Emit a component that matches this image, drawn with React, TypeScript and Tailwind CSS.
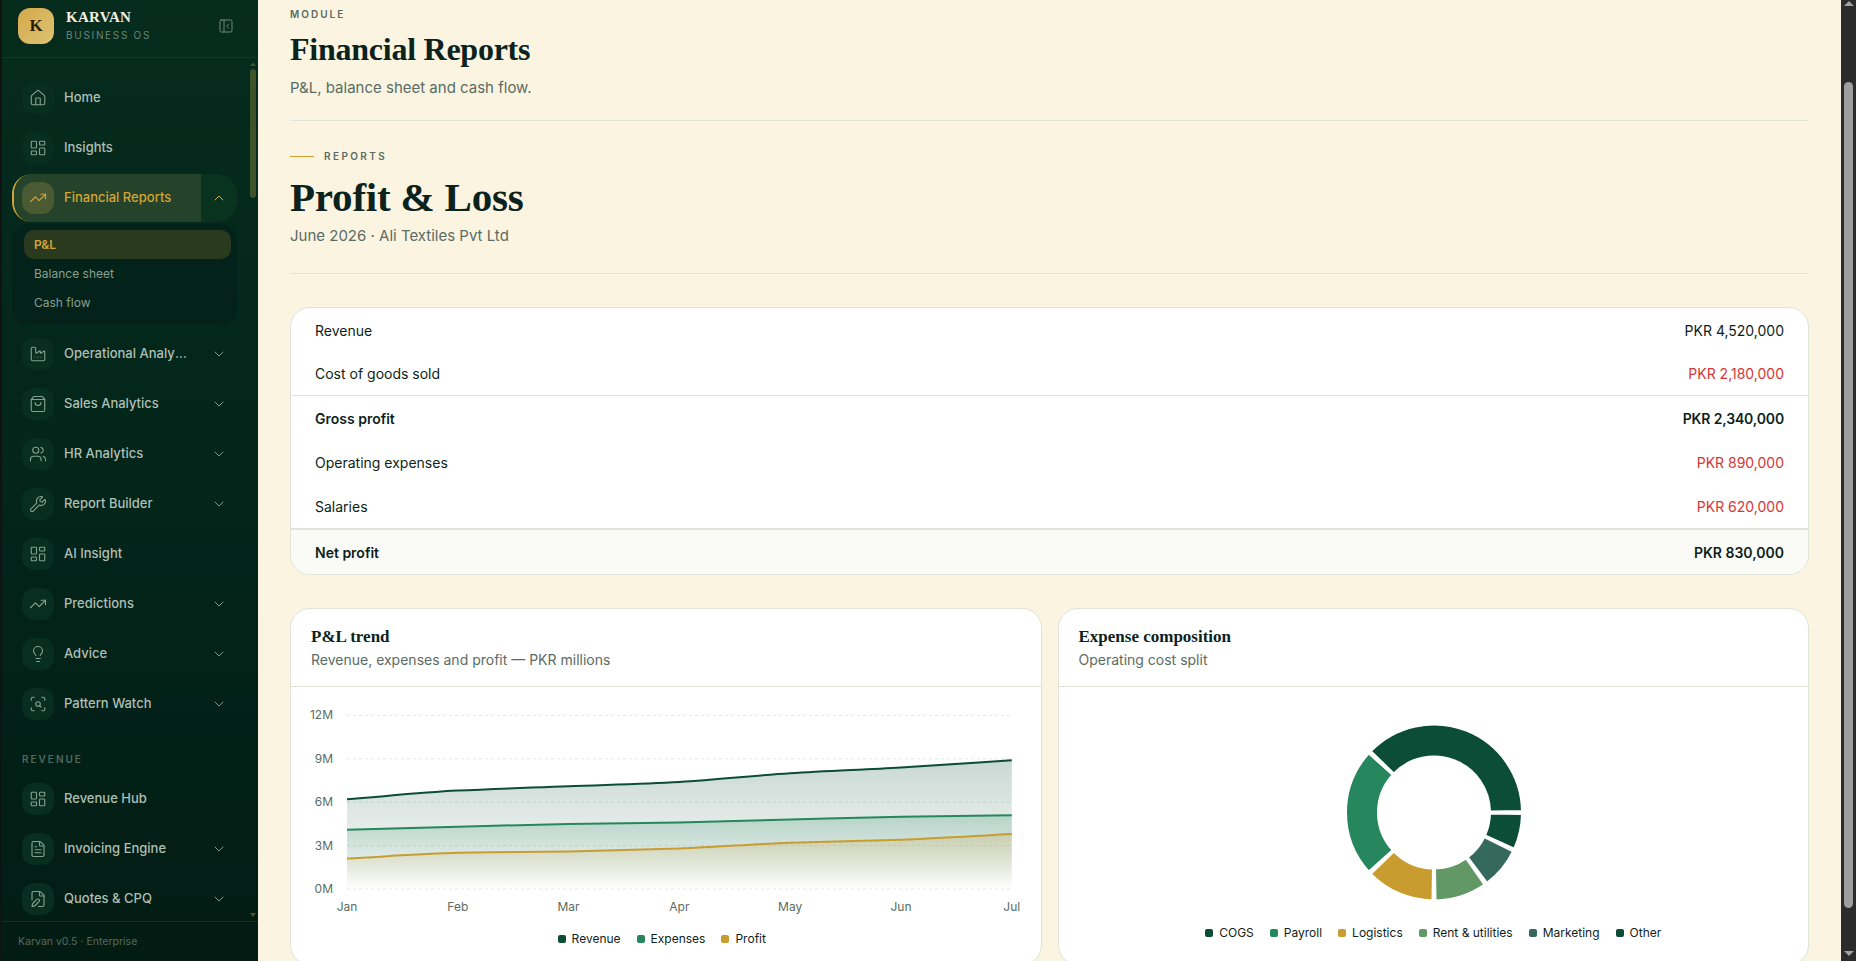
import {
  ChevronDown,
  ChevronUp,
  Factory,
  FilePen,
  FileText,
  House,
  LayoutDashboard,
  Lightbulb,
  PanelLeftClose,
  ScanSearch,
  ShoppingBag,
  TrendingUp,
  Users,
  Wrench,
  type LucideIcon,
} from 'lucide-react';

const serif = "font-['Liberation_Serif',serif]";

interface NavItem {
  label: string;
  icon: LucideIcon;
  chevron?: boolean;
}

const analyticsNav: NavItem[] = [
  { label: 'Operational Analytics', icon: Factory, chevron: true },
  { label: 'Sales Analytics', icon: ShoppingBag, chevron: true },
  { label: 'HR Analytics', icon: Users, chevron: true },
  { label: 'Report Builder', icon: Wrench, chevron: true },
  { label: 'AI Insight', icon: LayoutDashboard },
  { label: 'Predictions', icon: TrendingUp, chevron: true },
  { label: 'Advice', icon: Lightbulb, chevron: true },
  { label: 'Pattern Watch', icon: ScanSearch, chevron: true },
];

const revenueNav: NavItem[] = [
  { label: 'Revenue Hub', icon: LayoutDashboard },
  { label: 'Invoicing Engine', icon: FileText, chevron: true },
  { label: 'Quotes & CPQ', icon: FilePen, chevron: true },
];

const rows = [
  { label: 'Revenue', value: 'PKR 4,520,000' },
  { label: 'Cost of goods sold', value: 'PKR 2,180,000', red: true, divider: true },
  { label: 'Gross profit', value: 'PKR 2,340,000', bold: true },
  { label: 'Operating expenses', value: 'PKR 890,000', red: true },
  { label: 'Salaries', value: 'PKR 620,000', red: true },
];

const months = ['Jan', 'Feb', 'Mar', 'Apr', 'May', 'Jun', 'Jul'];
const trend = [
  { key: 'Revenue', color: '#0b4d36', values: [6.2, 6.8, 7.1, 7.4, 8.0, 8.4, 8.9] },
  { key: 'Expenses', color: '#26875f', values: [4.1, 4.3, 4.5, 4.6, 4.8, 5.0, 5.1] },
  { key: 'Profit', color: '#c99c30', values: [2.1, 2.5, 2.6, 2.8, 3.2, 3.4, 3.8] },
];

const expenses = [
  { label: 'COGS', color: '#0b4d36', pct: 38 },
  { label: 'Payroll', color: '#26875f', pct: 24 },
  { label: 'Logistics', color: '#c99c30', pct: 13 },
  { label: 'Rent & utilities', color: '#629865', pct: 10 },
  { label: 'Marketing', color: '#35695b', pct: 8 },
  { label: 'Other', color: '#0b4d36', pct: 7 },
];

const chartX = (i: number) => 56 + i * 110.8;
const chartY = (v: number) => 202 - v * 14.47;

// same shape as d3 curveMonotoneX
function monotonePath(pts: [number, number][]) {
  const n = pts.length;
  const slopes: number[] = [];
  for (let i = 0; i < n - 1; i++) {
    slopes.push((pts[i + 1][1] - pts[i][1]) / (pts[i + 1][0] - pts[i][0]));
  }
  const tangents = pts.map((_, i) => {
    if (i === 0) return slopes[0];
    if (i === n - 1) return slopes[n - 2];
    const a = slopes[i - 1];
    const b = slopes[i];
    if (a * b <= 0) return 0;
    return (2 * a * b) / (a + b);
  });
  let d = `M${pts[0][0]},${pts[0][1]}`;
  for (let i = 0; i < n - 1; i++) {
    const h = (pts[i + 1][0] - pts[i][0]) / 3;
    d += `C${pts[i][0] + h},${pts[i][1] + h * tangents[i]} ${pts[i + 1][0] - h},${pts[i + 1][1] - h * tangents[i + 1]} ${pts[i + 1][0]},${pts[i + 1][1]}`;
  }
  return d;
}

function donutSlice(cx: number, cy: number, r0: number, r1: number, from: number, to: number) {
  const pt = (r: number, a: number) => {
    const rad = (a * Math.PI) / 180;
    return `${cx + r * Math.cos(rad)},${cy - r * Math.sin(rad)}`;
  };
  const large = to - from > 180 ? 1 : 0;
  return `M${pt(r1, from)}A${r1},${r1} 0 ${large} 0 ${pt(r1, to)}L${pt(r0, to)}A${r0},${r0} 0 ${large} 1 ${pt(r0, from)}Z`;
}

function NavRow({ item }: { item: NavItem }) {
  const Icon = item.icon;
  return (
    <div className="mb-0.5 flex h-12 shrink-0 items-center pl-5 pr-[31px]">
      <span className="flex h-8 w-8 shrink-0 items-center justify-center rounded-xl bg-[#072e20] text-[#84a091]">
        <Icon size={18} strokeWidth={1.5} />
      </span>
      <span className="ml-2.5 w-[123px] truncate text-[13px] font-medium text-[#aebfb4]">{item.label}</span>
      {item.chevron && <ChevronDown size={16} strokeWidth={1.5} className="ml-auto text-[#7d9a8b]" />}
    </div>
  );
}

function Sidebar() {
  return (
    <aside className="flex h-screen w-[258px] shrink-0 flex-col border-l-2 border-[#0f1412] bg-gradient-to-b from-[#062c1e] via-[#03251a] to-[#021c14]">
      <div className="flex h-[58px] shrink-0 items-start border-b border-[#103a29] pl-4 pr-6 pt-2">
        <div className={`flex h-9 w-9 items-center justify-center rounded-xl bg-gradient-to-br from-[#d4a94a] to-[#dcc373] text-[17px] font-bold text-[#2b1c08] ${serif}`}>
          K
        </div>
        <div className="ml-3">
          <div className={`text-[15px] leading-[18px] font-bold tracking-[0.3px] text-[#f3efe0] ${serif}`}>KARVAN</div>
          <div className="mt-px text-[10px] leading-[16px] tracking-[1.7px] text-[#6b8578]">BUSINESS OS</div>
        </div>
        <PanelLeftClose size={16} strokeWidth={1.5} className="ml-auto mt-2.5 text-[#6d8a7b]" />
      </div>

      <div className="relative min-h-0 flex-1 overflow-hidden pt-4">
        <NavRow item={{ label: 'Home', icon: House }} />
        <NavRow item={{ label: 'Insights', icon: LayoutDashboard }} />

        <div className="ml-2.5 mr-[21px] flex h-12 overflow-hidden rounded-[20px] border-l-2 border-[#d4a437]">
          <div className="flex flex-1 items-center bg-[#24432a] pl-2">
            <span className="flex h-8 w-8 items-center justify-center rounded-xl bg-[#4a5a33] text-[#d4a437]">
              <TrendingUp size={18} strokeWidth={1.5} />
            </span>
            <span className="ml-2.5 text-[13px] font-medium text-[#d4a437]">Financial Reports</span>
          </div>
          <div className="flex w-9 items-center justify-center bg-[#07331f] text-[#d4a437]">
            <ChevronUp size={16} strokeWidth={1.5} />
          </div>
        </div>

        <div className="ml-2.5 mr-[21px] mt-0.5 mb-1.5 flex h-[100px] flex-col rounded-2xl bg-[#03211a]/90 pl-3 pr-1.5 pt-1.5 text-[12px]">
          <div className="flex h-[29px] items-center rounded-[10px] bg-[#2a3a1e] pl-2.5 font-semibold text-[#d4a437]">P&amp;L</div>
          <div className="flex h-[29px] items-center pl-2.5 text-[#87a090]">Balance sheet</div>
          <div className="flex h-[29px] items-center pl-2.5 text-[#87a090]">Cash flow</div>
        </div>

        {analyticsNav.map((item) => (
          <NavRow key={item.label} item={item} />
        ))}

        <div className="flex h-[45px] items-center pl-5 pt-3.5 text-[10px] font-semibold tracking-[2px] text-[#4f6a5c]">REVENUE</div>

        {revenueNav.map((item) => (
          <NavRow key={item.label} item={item} />
        ))}

        {/* sidebar scrollbar */}
        <div className="absolute right-0 top-0 bottom-0 flex w-[9px] flex-col items-center pr-0.5">
          <div className="mt-1 h-0 w-0 border-x-[3px] border-b-[4px] border-x-transparent border-b-[#3f5228]" />
          <div className="mt-[3px] h-[129px] w-1.5 rounded-full bg-[#3f5228]" />
          <div className="mt-auto mb-1 h-0 w-0 border-x-[3px] border-t-[4px] border-x-transparent border-t-[#5a5224]" />
        </div>
      </div>

      <div className="flex h-10 shrink-0 items-center border-t border-[#0e3324] pl-4 text-[10.5px] text-[#56695f]">
        Karvan v0.5 · Enterprise
      </div>
    </aside>
  );
}

function Hairline() {
  return <div className="h-px bg-[#e3e4d9]" />;
}

function PageHeads() {
  return (
    <>
      <div className="text-[10px] leading-[14px] font-semibold tracking-[2px] text-[#5b6c64]">MODULE</div>
      <h2 className={`mt-[9px] text-[32px] leading-[38px] font-bold tracking-[-0.25px] text-[#0b231c] ${serif}`}>Financial Reports</h2>
      <p className="mt-[9px] text-[15px] leading-[22px] text-[#5b6c64]">P&amp;L, balance sheet and cash flow.</p>
      <div className="mt-[21px]">
        <Hairline />
      </div>

      <div className="mt-[28px] flex items-center gap-2.5">
        <span className="h-px w-6 bg-[#cf9f2e]" />
        <span className="text-[10px] leading-[14px] font-semibold tracking-[2.4px] text-[#5b6c64]">REPORTS</span>
      </div>
      <h1 className={`mt-[10px] text-[41px] leading-[48px] font-bold tracking-[-0.2px] text-[#0b231c] ${serif}`}>Profit &amp; Loss</h1>
      <p className="mt-[4px] text-[15px] leading-[22px] text-[#5b6c64]">June 2026 · Ali Textiles Pvt Ltd</p>
      <div className="mt-[26px]">
        <Hairline />
      </div>
    </>
  );
}

function PnlTable() {
  return (
    <div className="mt-[33px] overflow-hidden rounded-[20px] border border-[#dfe3da] bg-white text-[14px] text-[#0d1f1a]">
      {rows.map((row) => (
        <div
          key={row.label}
          className={`flex h-11 items-center justify-between px-6 ${row.divider ? 'border-b border-[#dfe3da]' : ''} ${row.bold ? 'font-semibold' : ''}`}
        >
          <span>{row.label}</span>
          <span className={row.red ? 'text-[#d63636]' : row.bold ? 'tracking-[-0.15px]' : ''}>{row.value}</span>
        </div>
      ))}
      <div className="flex h-[46px] items-center justify-between border-t-2 border-[#dfe3da] bg-[#fafaf7] px-6 font-semibold">
        <span>Net profit</span>
        <span>PKR 830,000</span>
      </div>
    </div>
  );
}

function Legend({ items }: { items: { label: string; color: string }[] }) {
  return (
    <div className="flex items-center justify-center gap-4 text-[12px] text-[#10241d]">
      {items.map((it) => (
        <span key={it.label} className="flex items-center gap-1.5">
          <span className="h-2 w-2 rounded-[2px]" style={{ background: it.color }} />
          {it.label}
        </span>
      ))}
    </div>
  );
}

function ChartCard({ title, sub, children }: { title: string; sub: string; children: React.ReactNode }) {
  return (
    <div className="h-[357px] overflow-hidden rounded-[20px] border border-[#dfe3da] bg-white">
      <div className="h-[78px] border-b border-[#dfe3da] px-5 pt-[18px]">
        <div className={`text-[17px] leading-[20px] font-bold text-[#0b231c] ${serif}`}>{title}</div>
        <div className="mt-[3px] text-[14px] leading-[20px] text-[#5b6c64]">{sub}</div>
      </div>
      {children}
    </div>
  );
}

function TrendChart() {
  const base = chartY(0);
  return (
    <svg width={749} height={243} className="block">
      <defs>
        {trend.map((s) => (
          <linearGradient key={s.key} id={`grad-${s.key}`} x1="0" y1="0" x2="0" y2="1">
            <stop offset="0%" stopColor={s.color} stopOpacity={0.22} />
            <stop offset="100%" stopColor={s.color} stopOpacity={0} />
          </linearGradient>
        ))}
      </defs>
      {[0, 3, 6, 9, 12].map((v) => (
        <g key={v}>
          <line x1={56} x2={721} y1={chartY(v)} y2={chartY(v)} stroke="#e6e8e0" strokeDasharray="3 3" />
          <text x={42} y={chartY(v) + 4} textAnchor="end" fontSize={12} fill="#5b6c64" fontFamily="Inter">
            {v}M
          </text>
        </g>
      ))}
      {trend.map((s) => {
        const line = monotonePath(s.values.map((v, i) => [chartX(i), chartY(v)]));
        return (
          <g key={s.key}>
            <path d={`${line}L${chartX(6)},${base}L${chartX(0)},${base}Z`} fill={`url(#grad-${s.key})`} />
            <path d={line} fill="none" stroke={s.color} strokeWidth={2} />
          </g>
        );
      })}
      {months.map((m, i) => (
        <text key={m} x={chartX(i)} y={224} textAnchor="middle" fontSize={12} fill="#5b6c64" fontFamily="Inter">
          {m}
        </text>
      ))}
    </svg>
  );
}

function Donut() {
  let start = 0;
  return (
    <svg width={749} height={231} className="block">
      {expenses.map((e) => {
        const sweep = (e.pct / 100) * 360;
        const d = donutSlice(375, 125.5, 56, 88, start + 1, start + sweep - 1);
        start += sweep;
        return <path key={e.label} d={d} fill={e.color} stroke="#ffffff" strokeWidth={2} />;
      })}
    </svg>
  );
}

export default function App() {
  return (
    <div className="flex h-screen overflow-hidden bg-[#faf4e1] font-['Inter',sans-serif]">
      <Sidebar />

      <main className="min-w-0 flex-1 overflow-hidden px-8 pt-[7px]">
        <PageHeads />
        <PnlTable />
        <div className="mt-[33px] grid grid-cols-2 gap-4">
          <ChartCard title="P&L trend" sub="Revenue, expenses and profit — PKR millions">
            <TrendChart />
            <div className="pr-2">
              <Legend items={trend.map((s) => ({ label: s.key, color: s.color }))} />
            </div>
          </ChartCard>
          <ChartCard title="Expense composition" sub="Operating cost split">
            <Donut />
            <div className="pt-1.5">
              <Legend items={expenses} />
            </div>
          </ChartCard>
        </div>
      </main>

      {/* page scrollbar */}
      <div className="flex h-screen w-[15px] shrink-0 flex-col items-center bg-[#2b2b2b]">
        <div className="mt-[1px] h-0 w-0 border-x-[5px] border-b-[5px] border-x-transparent border-b-[#a0a0a0]" />
        <div className="mt-[76px] h-[826px] w-[9px] rounded-t-[5px] rounded-b-[5px] bg-[#9e9e9e]" />
        <div className="mt-auto mb-[5px] h-0 w-0 border-x-[5px] border-t-[5px] border-x-transparent border-t-[#a0a0a0]" />
      </div>
    </div>
  );
}
